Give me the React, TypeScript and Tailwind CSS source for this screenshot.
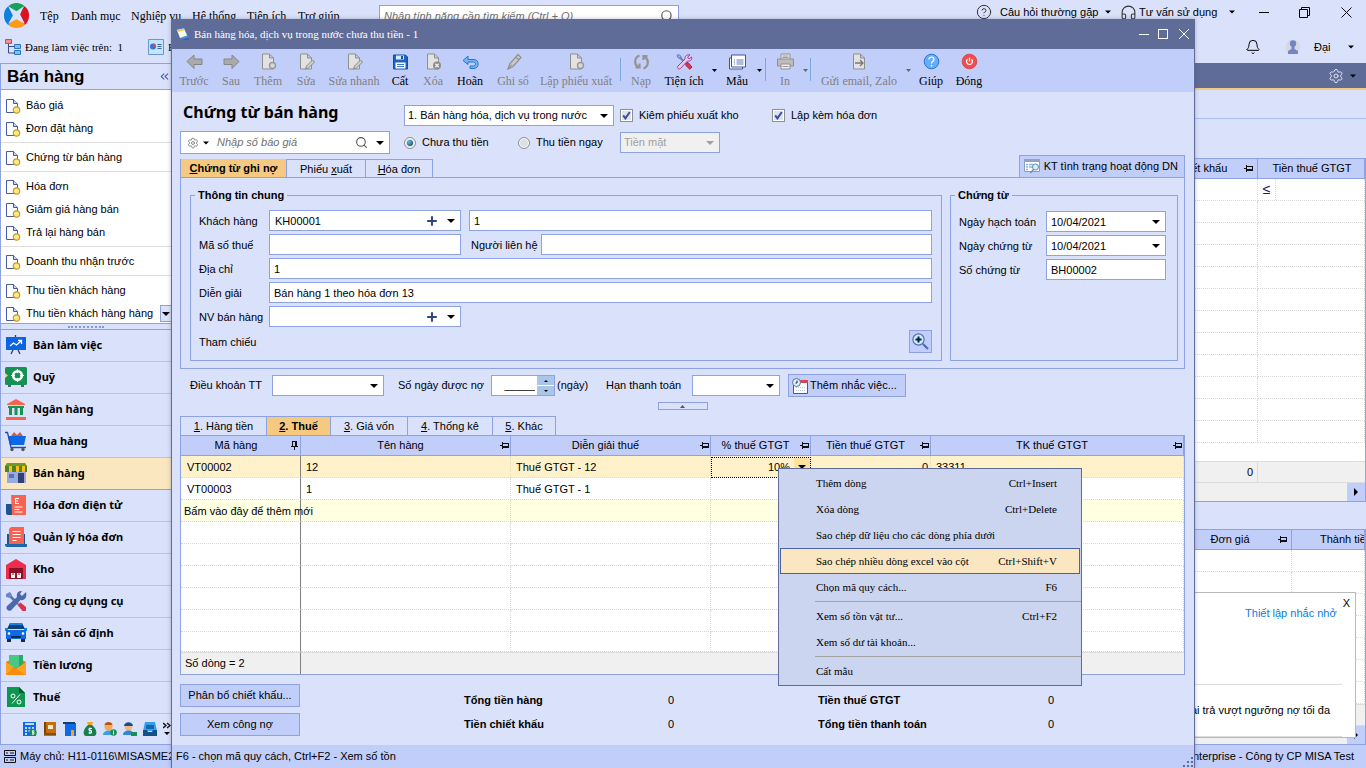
import React, { type ReactNode } from "react";
import { Bell, ChevronsLeft, CircleHelp, Headphones, Plus, Search, Settings } from "lucide-react";

const serif = "font-['Liberation_Serif','Times_New_Roman',serif]";

function Caret({ className = "text-black" }: { className?: string }) {
  return (
    <svg width="8" height="4" viewBox="0 0 8 4" className={`shrink-0 ${className}`} aria-hidden="true">
      <path d="M0 0h8L4 4z" fill="currentColor" />
    </svg>
  );
}

function PinSide() {
  return (
    <svg width="9" height="7" viewBox="0 0 9 7" className="shrink-0" aria-hidden="true">
      <path d="M0 3h2v1H0zM2 0h1v7H2zM3 1h6v1H3zM3 4h6v2H3zM8 1h1v5H8z" fill="#111" />
    </svg>
  );
}

function PinUp() {
  return (
    <svg width="7" height="9" viewBox="0 0 7 9" className="shrink-0" aria-hidden="true">
      <path d="M1 0h5v1H1zM1 0h1v6H1zM4 0h2v6H4zM0 5h7v1H0zM3 6h1v3H3z" fill="#111" />
    </svg>
  );
}

/* ---------- form controls ---------- */

function Select({ id, value, width, disabled }: { id: string; value: string; width: string; disabled?: boolean }) {
  const tone = disabled ? "bg-[#f0f0f0] text-[#a0a0a0]" : "bg-white text-black";
  return (
    <div className={`grid h-[21px] shrink-0 items-center border border-[#8ea1e0] ${width} ${tone}`}>
      <select
        id={id}
        aria-label={id}
        disabled={disabled}
        defaultValue={value}
        className="col-start-1 row-start-1 h-full w-full appearance-none bg-transparent pl-[3px] pr-4 opacity-100 outline-none"
      >
        <option>{value}</option>
      </select>
      <span className="pointer-events-none col-start-1 row-start-1 mr-[5px] justify-self-end">
        <Caret className={disabled ? "text-[#a0a0a0]" : "text-black"} />
      </span>
    </div>
  );
}

function Combo({ id, value, plus, width }: { id: string; value: string; plus?: boolean; width: string }) {
  return (
    <div className={`flex h-[21px] shrink-0 items-center border border-[#8ea1e0] bg-white ${width}`}>
      <input
        id={id}
        defaultValue={value}
        className={`h-full w-0 min-w-0 flex-1 outline-none ${plus ? "pl-[5px]" : "pl-1"}`}
      />
      {plus && (
        <button type="button" aria-label="Thêm mới" className="mr-2 text-[#33467f]">
          <Plus size={14} strokeWidth={3.5} />
        </button>
      )}
      <button type="button" aria-label="Mở danh sách" className="mr-[5px] flex h-full items-center">
        <Caret />
      </button>
    </div>
  );
}

function Field({ id, value = "", className = "" }: { id: string; value?: string; className?: string }) {
  return (
    <input
      id={id}
      aria-label={id}
      defaultValue={value}
      className={`h-[21px] min-w-0 border border-[#8ea1e0] bg-white pl-1 outline-none ${className}`}
    />
  );
}

function Check({ children }: { children: ReactNode }) {
  return (
    <label className="flex items-center gap-[6px] whitespace-nowrap">
      <span className="grid size-[13px] items-center justify-items-center">
        <input
          type="checkbox"
          defaultChecked
          className="col-start-1 row-start-1 size-[13px] appearance-none border border-[#8e8f8f] bg-[#dfe2ea] shadow-[inset_0_0_0_1px_#fff]"
        />
        <svg viewBox="0 0 9 9" className="pointer-events-none col-start-1 row-start-1 size-[9px]">
          <path d="M1.2 4.4l2.2 3L7.8 1" fill="none" stroke="#3c4f9b" strokeWidth="2" />
        </svg>
      </span>
      {children}
    </label>
  );
}

function Radio({ children, checked, width }: { children: ReactNode; checked?: boolean; width: string }) {
  return (
    <label className={`flex items-center gap-[6px] whitespace-nowrap ${width}`}>
      <span className="grid size-3 items-center justify-items-center">
        <input
          type="radio"
          name="payment"
          defaultChecked={checked}
          className="col-start-1 row-start-1 size-3 appearance-none rounded-full border border-[#8e8f8f] bg-[#dcdfe4] shadow-[inset_0_0_0_1px_#fff]"
        />
        {checked && (
          <span className="pointer-events-none col-start-1 row-start-1 size-[6px] rounded-full bg-radial-[at_35%_35%] from-[#5cc4ea] to-[#0b2f55]" />
        )}
      </span>
      {children}
    </label>
  );
}

/* ---------- toolbar icons ---------- */

const page = <path d="M2.5.5h7l4 4v11h-11zM9.5.5v4h4" fill="#e2e2e2" stroke="#8f8f8f" />;
const pencil = <path d="M14.5 6.5l2 2-6 6-3 1 1-3z" fill="#cfcfcf" stroke="#8a8a8a" />;

const toolIcons: Record<string, ReactNode> = {
  prev: <path d="M8 1.500v4h8v5.500H8v4L1 8z" fill="#aaa" stroke="#858585" />,
  next: <path d="M9 1.500v4H1v5.500h8v4l7-7z" fill="#aaa" stroke="#858585" />,
  add: (
    <>
      {page}
      <circle cx="12.5" cy="12" r="3" fill="#d8d8d8" stroke="#999" strokeWidth="1.4" />
    </>
  ),
  edit: (
    <>
      {page}
      {pencil}
    </>
  ),
  save: (
    <>
      <path d="M1.5 1.5h12l2 2v12h-14z" fill="#1c63c4" stroke="#14509f" />
      <path d="M4 2h8v4H4z" fill="#dcebfa" />
      <path d="M9 2.5h2v3H9z" fill="#14509f" />
      <path d="M3.5 9h10v6h-10z" fill="#fff" />
      <path d="M5 11h7M5 13h7" stroke="#3a79cc" />
    </>
  ),
  del: (
    <>
      {page}
      <circle cx="12" cy="12" r="4" fill="#8c8c8c" />
      <path d="M10.3 10.3l3.4 3.4M13.7 10.3l-3.4 3.4" stroke="#eee" strokeWidth="1.3" />
    </>
  ),
  undo: (
    <path
      d="M6 2.500L1 7l5 4V8.500h5.500c2.600 0 2.600 4 0 4H8V15h4c5.500 0 5.500-9 0-9H6z"
      fill="#74b6fa"
      stroke="#2a73cc"
    />
  ),
  pen: (
    <>
      <path d="M13 1l3 3-8 9-5 2.5L5 10z" fill="#c9c9c9" stroke="#939393" strokeWidth="1.3" />
      <path d="M11 4l3 2M3 15l4-4" stroke="#858585" />
    </>
  ),
  reload: (
    <path
      d="M6.5 2C1 4 1 11 5 13.5M2.5 14h4v-4M10.5 15C16 13 16 6 12 3.5M14.5 2.5h-4v4"
      fill="none"
      stroke="#949494"
      strokeWidth="2.2"
    />
  ),
  tools: (
    <>
      <path d="M3 3l9 9" stroke="#6d7ab7" strokeWidth="2" />
      <path d="M1 2l2-1 2 2-1 2-2-1z" fill="#9db1e8" stroke="#6071b4" />
      <path d="M10 10l2-1 4 4.5-2.200 2.300L10 12z" fill="#d9374e" stroke="#9e2140" />
      <path
        d="M14 1.500l-2.500 2.200 1.500 1.800 2.500-2c1 3-1.500 4.500-4 4L4.500 15c-1.800 1.500-4-.8-2.500-2.500L9 5.500C8.500 3 11 .5 14 1.500z"
        fill="#eec4e5"
        stroke="#93479c"
      />
    </>
  ),
  forms: (
    <>
      <path d="M.5 4.500h13v11H.5z" fill="#fff" stroke="#44548f" />
      <path d="M2.500 1.500h14v12h-14z" fill="#fff" stroke="#44548f" />
      <path d="M5 6.500h1M7.500 6.500h7M5 8.500h1M7.500 8.500h7M5 10.500h1M7.500 10.500h7" stroke="#5b78c6" />
    </>
  ),
  print: (
    <>
      <path d="M4 .5h9v6H4z" fill="#eee" stroke="#8f8f8f" />
      <path d="M.5 5.500h16v7H.5z" fill="#bdbdbd" stroke="#8f8f8f" />
      <path d="M4 10.500h9v5H4z" fill="#eee" stroke="#8f8f8f" />
      <path d="M5.500 2.500h6M5.500 4h6M5.500 13h6" stroke="#999" />
    </>
  ),
  send: (
    <>
      {page}
      <path d="M4 9.500h8M9 6.500l3 3-3 3" fill="none" stroke="#777" strokeWidth="1.3" />
    </>
  ),
  help: (
    <>
      <circle cx="8.5" cy="8" r="7.3" fill="#62aefc" stroke="#2f74cf" />
      <path d="M6 6c0-3.300 5.200-3 5 0-.1 1.800-2.500 1.700-2.500 4M8.500 11.500V13" fill="none" stroke="#fff" strokeWidth="1.4" />
    </>
  ),
  power: (
    <>
      <circle cx="8.5" cy="8" r="7.3" fill="#f14d4f" stroke="#cf4a52" />
      <path d="M6.500 5.800C4.500 7.500 5.800 11 8.500 11s4-3.500 2-5.200M8.500 4.200v3.800" fill="none" stroke="#fff" strokeWidth="1.2" />
    </>
  ),
};

type Tool =
  | { kind: "button"; icon: string; label: string; width: string; on?: boolean }
  | { kind: "caret"; width: string; on?: boolean }
  | { kind: "rule" };

const tools: Tool[] = [
  { kind: "button", icon: "prev", label: "Trước", width: "w-9" },
  { kind: "button", icon: "next", label: "Sau", width: "w-[38px]" },
  { kind: "button", icon: "add", label: "Thêm", width: "w-9" },
  { kind: "button", icon: "edit", label: "Sửa", width: "w-10" },
  { kind: "button", icon: "edit", label: "Sửa nhanh", width: "w-14" },
  { kind: "button", icon: "save", label: "Cất", width: "w-9", on: true },
  { kind: "button", icon: "del", label: "Xóa", width: "w-[30px]" },
  { kind: "button", icon: "undo", label: "Hoãn", width: "w-11", on: true },
  { kind: "button", icon: "pen", label: "Ghi sổ", width: "w-[42px]" },
  { kind: "button", icon: "add", label: "Lập phiếu xuất", width: "w-[84px]" },
  { kind: "rule" },
  { kind: "button", icon: "reload", label: "Nạp", width: "w-9" },
  { kind: "button", icon: "tools", label: "Tiện ích", width: "w-[50px]", on: true },
  { kind: "caret", width: "w-[10px]", on: true },
  { kind: "button", icon: "forms", label: "Mẫu", width: "w-9", on: true },
  { kind: "caret", width: "w-2", on: true },
  { kind: "rule" },
  { kind: "button", icon: "print", label: "In", width: "w-[34px]" },
  { kind: "caret", width: "w-[6px]" },
  { kind: "rule" },
  { kind: "button", icon: "send", label: "Gửi email, Zalo", width: "w-[92px]" },
  { kind: "caret", width: "w-[6px]" },
  { kind: "button", icon: "help", label: "Giúp", width: "w-10", on: true },
  { kind: "button", icon: "power", label: "Đóng", width: "w-9", on: true },
];

function Toolbar() {
  return (
    <div className={`flex h-[43px] shrink-0 items-stretch bg-[#c2cefa] pl-1 text-[12px] leading-4 ${serif}`}>
      {tools.map((t, i) => {
        if (t.kind === "rule") return <span key={i} className="mx-0.5 mt-[9px] h-[23px] w-px shrink-0 bg-[#7aa7dc]" />;
        if (t.kind === "caret")
          return (
            <button key={i} type="button" aria-label="Mở thêm" className={`flex shrink-0 justify-center pt-5 ${t.width}`}>
              <svg width="5" height="3" viewBox="0 0 5 3">
                <path d="M0 0h5L2.500 3z" fill={t.on ? "#000" : "#666"} />
              </svg>
            </button>
          );
        return (
          <button
            key={i}
            type="button"
            className={`flex shrink-0 flex-col items-center gap-[3px] whitespace-nowrap pt-1 ${t.width} ${
              t.on ? "text-black" : "text-[#808080]"
            }`}
          >
            <svg width="17" height="17" viewBox="0 0 17 16" aria-hidden="true">
              {toolIcons[t.icon]}
            </svg>
            <span>{t.label}</span>
          </button>
        );
      })}
    </div>
  );
}

/* ---------- sidebar ---------- */

const shortcutGroups = [
  ["Báo giá", "Đơn đặt hàng"],
  ["Chứng từ bán hàng"],
  ["Hóa đơn", "Giảm giá hàng bán", "Trả lại hàng bán"],
  ["Doanh thu nhận trước"],
  ["Thu tiền khách hàng", "Thu tiền khách hàng hàng"],
];

function DocIcon() {
  return (
    <svg width="15" height="16" viewBox="0 0 15 16" className="shrink-0" aria-hidden="true">
      <path d="M.5 1.500h7l4 4v9H.5z" fill="#fff" stroke="#4759a0" />
      <path d="M7.500 1.500v4h4" fill="#c9d6fb" stroke="#4759a0" />
      <circle cx="10.500" cy="12" r="3.200" fill="#ffe68a" stroke="#c49a2c" strokeWidth="1.200" />
    </svg>
  );
}

const navIcons: Record<string, ReactNode> = {
  board: (
    <>
      <path d="M10.500 0v2M8 15l-2 4M13 15l2 4" stroke="#20407a" strokeWidth="1.300" />
      <path d="M1 2h20v13H1z" fill="#0a64e4" />
      <path d="M5 11l3.500-3 3 2L16 6M13 5.500h3.500V9" fill="none" stroke="#fff" strokeWidth="1.300" />
    </>
  ),
  safe: (
    <>
      <path d="M3 17h3v3H3zM16 17h3v3h-3z" fill="#56606e" />
      <rect width="22" height="18" rx="1.500" fill="#159253" />
      <circle cx="12.500" cy="8.500" r="4.300" fill="none" stroke="#fff" strokeWidth="2.600" />
      <path d="M12.500 2v13M6 8.500h13" stroke="#fff" strokeWidth="1.200" />
      <circle cx="12.500" cy="8.500" r="2.500" fill="#159253" />
      <path d="M0 6l3 2.500L0 11z" fill="#e9df3c" />
    </>
  ),
  bank: (
    <>
      <path d="M11 0l9 5v1H2V5zM1 18h20v3H1z" fill="#fb6150" />
      <path d="M3 7h16v2H3zM4 9h3v7H4zM9.500 9h3v7h-3zM15 9h3v7h-3z" fill="#189450" />
    </>
  ),
  cart: (
    <>
      <path d="M6 5l3-4 3 3 3-3 3 4z" fill="#d35b43" />
      <path d="M3 5h18l-2 9H5z" fill="#0b68e6" />
      <path d="M0 1.500h2.500L6 16.500h15" fill="none" stroke="#1c4fb5" strokeWidth="1.300" />
      <circle cx="7" cy="18.500" r="1.700" fill="#555" />
      <circle cx="18" cy="18.500" r="1.700" fill="#555" />
    </>
  ),
  shop: (
    <>
      <path d="M2 8h19v12H2z" fill="#98abe0" />
      <path d="M13 10h6v10h-6z" fill="#34406f" />
      <path d="M4 11h5v4H4z" fill="#5a72bd" />
      <path d="M2 0h18l2 4v4.500H0V4z" fill="#fdc012" />
      <path d="M2 0h18l2 3H0z" fill="#6d9a2a" />
      <path d="M0 3h4v6H0zM7 3h4v6H7zM14 3h3v6h-3zM20 3h2v6h-2z" fill="#4f8426" />
    </>
  ),
  einvoice: (
    <>
      <path d="M1 9h7v11H3q-2 0-2-2z" fill="#1a5590" />
      <path d="M6 0h15v20H7z" fill="#fb6150" />
      <path d="M10 3.500h4M10 6h3M10 8.500h4M10.500 3v6M9.500 12h8M9.500 14.500h5M9.500 17h8" stroke="#fff" strokeWidth="1.100" />
    </>
  ),
  invoice: (
    <>
      <path d="M2 7h18v10H2z" fill="#1a5590" />
      <path d="M0 17h23v1q0 2-2 2H2q-2 0-2-2z" fill="#1768ad" />
      <path d="M6 0h13v17H4V2z" fill="#fb6150" />
      <path d="M7.500 4.500h8M7.500 7.500h8M7.500 10.500h8M7.500 13.500h4" stroke="#fff" strokeWidth="1.200" />
    </>
  ),
  store: (
    <>
      <path d="M1 6l10-6 10 6v14H1z" fill="#ee2c4e" />
      <path d="M4 9h14v11H4z" fill="#8a1228" />
      <path d="M6 14h4v5H6zM12 14h4v5h-4z" fill="#f4f4f4" />
      <path d="M7.500 14h1v2h-1zM13.500 14h1v2h-1z" fill="#8a1228" />
    </>
  ),
  wrench: (
    <>
      <path d="M3 3l10 10" stroke="#5572b8" strokeWidth="2.500" />
      <path d="M1 3l4-2 2 3-2 3-4-1z" fill="#6887cb" />
      <path d="M12.500 14l3-2.500 5.500 4.500v4h-3.500z" fill="#dc3150" />
      <path d="M21 1l-4 4-2-2 2-3c-4-.5-6 3-5 6L2 15c-2 3 1.500 6.500 4.500 4l9-10c4 1 7-3 5.500-8z" fill="#4c69ae" />
    </>
  ),
  car: (
    <>
      <path d="M5 0h12l3 6H2z" fill="#123f78" />
      <path d="M5 0h12l1 2H4zM0 5h3v3H0zM19 5h3v3h-3z" fill="#1486e8" />
      <path d="M1 7h20v9H1z" fill="#0d6ae4" />
      <path d="M2 16h4v3H2zM16 16h4v3h-4zM6 13h10v2H6z" fill="#12294d" />
      <circle cx="4" cy="10.500" r="1.300" fill="#fff" />
      <circle cx="18" cy="10.500" r="1.300" fill="#fff" />
    </>
  ),
  salary: (
    <>
      <path d="M1 7l10-5 10 5v13H1z" fill="#e08110" />
      <path d="M4 0h14v12H4z" fill="#47c983" />
      <path d="M14 0h4v12h-4z" fill="#2aa96b" />
      <path d="M1 7l10 7 10-7v13H1z" fill="#ffa21e" />
      <path d="M1 20l7-8 3 2 10 6z" fill="#f58c0c" />
    </>
  ),
  tax: (
    <>
      <path d="M2 0h12l6 6v14H2z" fill="#0d9650" />
      <path d="M14 0l6 6h-6z" fill="#075e34" />
      <circle cx="8" cy="9" r="2" fill="none" stroke="#fff" />
      <circle cx="14" cy="15" r="2" fill="none" stroke="#fff" />
      <path d="M15 7.500l-8 9" stroke="#fff" />
    </>
  ),
};

const nav = [
  ["board", "Bàn làm việc"],
  ["safe", "Quỹ"],
  ["bank", "Ngân hàng"],
  ["cart", "Mua hàng"],
  ["shop", "Bán hàng"],
  ["einvoice", "Hóa đơn điện tử"],
  ["invoice", "Quản lý hóa đơn"],
  ["store", "Kho"],
  ["wrench", "Công cụ dụng cụ"],
  ["car", "Tài sản cố định"],
  ["salary", "Tiền lương"],
  ["tax", "Thuế"],
];

const miniIcons: [string, ReactNode][] = [
  [
    "Giá thành",
    <>
      <path d="M0 0h13v14H0z" fill="#0d6ae4" />
      <path d="M2 2h9M2 6h2M5.500 6h2M9 6h2M2 9h2M5.500 9h2M2 12h2" stroke="#fff" strokeWidth="1.500" />
      <circle cx="10" cy="10.500" r="3.800" fill="#1a8e53" />
      <path d="M11.500 9h-2v1.500h1.500V12H9M10 8v5" stroke="#fff" fill="none" strokeWidth=".8" />
    </>,
  ],
  [
    "Sổ cái",
    <>
      <path d="M1 0h12v14H1z" fill="#c26f10" />
      <path d="M1 0h2v12H1z" fill="#7d420a" />
      <path d="M1 11h12v2H1z" fill="#8b4b0c" />
      <path d="M5 3h5v4H5z" fill="#fbe9c8" />
    </>,
  ],
  [
    "Hợp đồng",
    <>
      <path d="M2 1h11v13H2z" fill="#0d6ae4" />
      <path d="M0 0h12v2H0z" fill="#123f78" />
      <path d="M8 8h3v6H8z" fill="#fda51a" />
    </>,
  ],
  [
    "Ngân sách",
    <>
      <path d="M4 0h6l-1 3H5z" fill="#f2a51c" />
      <path d="M5 3h4c6 5 5 11 2 11H3c-3 0-4-6 2-11z" fill="#167f4b" />
      <path d="M9 6.500H6v2h2.500v2.500H5.500M7 5.500v6.500" stroke="#fff" fill="none" />
    </>,
  ],
  [
    "Thủ quỹ",
    <>
      <circle cx="5.500" cy="4.500" r="4" fill="#f7a94c" />
      <path d="M1.500 3C2-1 9-1 9.500 3z" fill="#b55413" />
      <path d="M0 13c0-6 11-6 11 0z" fill="#3f9fe2" />
      <circle cx="10.500" cy="10.500" r="3.300" fill="#1a8e53" />
      <path d="M10.500 8.500v4" stroke="#fff" />
    </>,
  ],
  [
    "Thủ kho",
    <>
      <circle cx="5.500" cy="5" r="3.800" fill="#f7b877" />
      <path d="M1 4C1.500-1 9.500-1 10 4z" fill="#17508f" />
      <path d="M0 13c0-6 11-6 11 0z" fill="#2f86d3" />
      <path d="M8 10h6v4H8z" fill="#1a8e53" />
    </>,
  ],
  [
    "Tài liệu",
    <>
      <path d="M2 0h10l2 9H0z" fill="#35a0ea" />
      <path d="M3 3h8v4H3z" fill="#1665ad" />
      <path d="M0 8h4l1 2h4l1-2h4v6H0z" fill="#11508c" />
    </>,
  ],
];

function Sidebar() {
  return (
    <aside className="relative flex w-[171px] shrink-0 flex-col border-b border-l border-[#8ea1e0]">
      <div className="flex h-[27px] shrink-0 items-center justify-between border-y border-[#8ea1e0] pl-[6px]">
        <h2 className="text-[17px] font-bold leading-5">Bán hàng</h2>
        <button type="button" aria-label="Thu gọn" className="text-[#4c62a8]">
          <ChevronsLeft size={13} />
        </button>
      </div>
      <ul className="h-[233px] shrink-0 overflow-hidden bg-white pt-1">
        {shortcutGroups.map((group, g) => (
          <li key={g} className={g ? "mt-0.5 border-t border-[#dedede] pt-[3px]" : ""}>
            {group.map((text) => (
              <a key={text} href="#" className="flex h-[23px] items-center gap-[5px] whitespace-nowrap pl-[5px]">
                <DocIcon />
                {text}
              </a>
            ))}
          </li>
        ))}
      </ul>
      <button
        type="button"
        aria-label="Cuộn xuống"
        className="absolute right-0 top-[242px] flex h-[17px] w-[11px] items-center justify-center border border-r-0 border-[#8ea1e0] bg-[#dae1fa]"
      >
        <Caret />
      </button>
      <div className="flex h-[7px] shrink-0 items-center justify-center border-y border-[#8ea1e0]">
        <span className="w-9 border-t-2 border-dotted border-[#8097de]" />
      </div>
      <nav className="font-['Noto_Sans','Open_Sans',sans-serif] font-bold">
        {nav.map(([icon, text]) => (
          <a
            key={text}
            href="#"
            className={`flex h-8 items-center gap-[6px] border-b pl-1 ${
              text === "Bán hàng" ? "border-[#8ea1e0] bg-[#fae6bf]" : "border-[#b3c2f2]"
            }`}
          >
            <svg width="22" height="21" viewBox="0 0 22 21" className="shrink-0" aria-hidden="true">
              {navIcons[icon]}
            </svg>
            {text}
          </a>
        ))}
      </nav>
      <div className="flex min-h-[30px] flex-1 items-center gap-[6px] overflow-hidden pl-[22px]">
        {miniIcons.map(([name, art]) => (
          <button key={name} type="button" aria-label={name} className="shrink-0">
            <svg width="14" height="14" viewBox="0 0 14 14">
              {art}
            </svg>
          </button>
        ))}
        <button type="button" aria-label="Thêm phân hệ" className="shrink-0">
          <svg width="8" height="14" viewBox="0 0 8 14">
            <path d="M0 1l3 2.500L0 6M4 1l3 2.500L4 6" fill="none" stroke="#111" strokeWidth="1.400" />
            <path d="M1 10h6l-3 3z" />
          </svg>
        </button>
      </div>
    </aside>
  );
}

/* ---------- main window ---------- */

function Logo() {
  return (
    <svg width="25" height="25" viewBox="0 0 24 24" className="ml-1 mt-[3px] shrink-0" aria-label="MISA">
      <path d="M12 12L4 3A12 12 0 0 1 20 3z" fill="#15a35b" />
      <path d="M12 12L20 3A12 12 0 0 1 20 21z" fill="#d81420" />
      <path d="M12 12L20 21A12 12 0 0 1 4 21z" fill="#ff9a12" />
      <path d="M12 12L4 21A12 12 0 0 1 4 3z" fill="#0f7fdc" />
      <path d="M4 3l8 5 7-5-3.500 8L20 20l-8-4.500L4 20l4.500-8z" fill="#dae1fa" />
    </svg>
  );
}

const appMenu: [string, string][] = [
  ["Tệp", "w-[31px]"],
  ["Danh mục", "w-[60px]"],
  ["Nghiệp vụ", "w-[61px]"],
  ["Hệ thống", "w-[55px]"],
  ["Tiện ích", "w-[51px]"],
  ["Trợ giúp", "w-[81px]"],
];

function AppHeader() {
  return (
    <header className="flex h-[63px] shrink-0 flex-col">
      <div className="flex h-[31px] items-start">
        <Logo />
        <nav className={`ml-[11px] flex h-8 items-center whitespace-nowrap text-[12px] ${serif}`}>
          {appMenu.map(([text, width]) => (
            <a key={text} href="#" className={width}>
              {text}
            </a>
          ))}
        </nav>
        <div className="mt-[5px] flex h-[22px] w-[300px] items-center border border-[#8ea1e0] bg-white pr-1">
          <input
            aria-label="Tìm kiếm tính năng"
            placeholder="Nhập tính năng cần tìm kiếm (Ctrl + Q)"
            className="min-w-0 flex-1 pl-1 italic outline-none placeholder:text-[#707070]"
          />
          <Search size={14} className="text-[#555]" />
        </div>
        <div className="ml-auto flex h-6 items-center whitespace-nowrap">
          <CircleHelp size={16} strokeWidth={1.5} className="mr-2 text-[#333]" />
          <a href="#" className="w-[105px]">
            Câu hỏi thường gặp
          </a>
          <Caret className="mr-[9px] w-[6px]" />
          <Headphones size={17} strokeWidth={1.5} className="mr-0.5 text-[#333]" />
          <a href="#" className="w-[90px]">
            Tư vấn sử dụng
          </a>
          <Caret className="mr-6 w-[6px]" />
          <button type="button" aria-label="Thu nhỏ" className="mr-[30px] h-px w-[10px] bg-black" />
          <button type="button" aria-label="Khôi phục" className="mr-[31px]">
            <svg width="11" height="11" viewBox="0 0 11 11" fill="none" stroke="#000">
              <path d="M.5 2.500h8v8h-8zM2.500 2.500v-2h8v8h-2" />
            </svg>
          </button>
          <button type="button" aria-label="Đóng ứng dụng" className="mr-[14px]">
            <svg width="11" height="11" viewBox="0 0 11 11" stroke="#000">
              <path d="M.5.5l10 10M10.500.5l-10 10" />
            </svg>
          </button>
        </div>
      </div>
      <div className="flex h-8 items-center whitespace-nowrap">
        <svg width="17" height="16" viewBox="0 0 17 16" className="ml-[5px] mr-[3px]" aria-hidden="true">
          <path d="M.5.500h6v4h-6z" fill="#fb8b89" stroke="#d24a4a" />
          <path d="M9.500 5.500h6v4h-6zM9.500 11.500h6v4h-6z" fill="#7cc0fb" stroke="#2d75c8" />
          <path d="M3.500 5v9h6M3.500 7.500h6" fill="none" stroke="#3a4f86" />
        </svg>
        <span className={`w-[123px] whitespace-pre ${serif}`}>{"Đang làm việc trên:  1"}</span>
        <svg width="16" height="16" viewBox="0 0 16 16" className="mr-1" aria-hidden="true">
          <path d="M.5.5h15v15H.5z" fill="#bfe6fb" stroke="#6d97c9" />
          <circle cx="5" cy="7.500" r="3" fill="#3f6fd0" />
          <path d="M5 7.500V4.500a3 3 0 0 1 3 3z" fill="#e44" />
          <path d="M9.500 5.500h4M9.500 7.500h4M9.500 9.500h4" stroke="#44659f" />
        </svg>
        <a href="#" className={serif}>
          Báo cáo
        </a>
        <div className="ml-auto flex items-center">
          <button type="button" aria-label="Thông báo" className="mr-6">
            <Bell size={16} strokeWidth={1.5} />
          </button>
          <svg width="16" height="16" viewBox="0 0 16 16" className="mr-[13px]" aria-hidden="true">
            <circle cx="8" cy="8" r="7.500" fill="#d5d9e0" />
            <circle cx="8" cy="4.500" r="3.200" fill="#7187c4" />
            <path d="M6.500 7h3v3l3.500 2v3H3v-3l3.500-2z" fill="#7187c4" />
          </svg>
          <span className="w-[34px]">Đại</span>
          <Caret className="mr-3 w-[6px]" />
        </div>
      </div>
    </header>
  );
}

const thBack = "border-r border-b border-[#8ea1e0] font-normal";
const tdBack = "border-r border-b border-dotted border-[#d8d8d8]";

function BackTable({
  cols,
  filter,
  rows,
  total,
  className,
}: {
  cols: [string, string][];
  filter?: boolean;
  rows: number;
  total?: string;
  className: string;
}) {
  return (
    <div className={`flex flex-col border border-[#8ea1e0] bg-white ${className}`}>
      <table className="w-full table-fixed border-separate border-spacing-0">
        <colgroup>
          <col />
          {cols.map(([name, width]) => (
            <col key={name} className={width} />
          ))}
        </colgroup>
        <thead className="bg-[#c2cefa]">
          <tr className="h-5">
            <th className={thBack} />
            {cols.map(([name], i) => (
              <th key={name} className={`${thBack} overflow-hidden whitespace-nowrap p-0`}>
                <div className={`flex items-center ${i === 0 ? "pr-1" : "w-[108px]"}`}>
                  <span className="flex-1">{name}</span>
                  {i === 0 && <PinSide />}
                </div>
              </th>
            ))}
          </tr>
        </thead>
        <tbody>
          {Array.from({ length: rows }, (_, r) => (
            <tr key={r} className="h-[22px]">
              <td className={tdBack} />
              <td className={tdBack} />
              <td className={`${tdBack} p-0`}>
                {filter && r === 0 && (
                  <span className="flex h-[21px] w-[18px] items-center justify-center border-r border-dotted border-[#d8d8d8] text-[14px] text-[#1d1d4f]">
                    ≤
                  </span>
                )}
              </td>
            </tr>
          ))}
        </tbody>
      </table>
      <div className="mt-auto flex h-[22px] shrink-0 items-center justify-end border-y border-[#dcdcdc] bg-[#f0f0f0]">
        <span className="flex h-full w-[100px] items-center justify-end border-r border-[#dcdcdc] pr-1">{total}</span>
        <span className="w-[107px]" />
      </div>
      <div className="flex h-[18px] shrink-0 justify-end bg-[#f0f0f0]">
        <button type="button" aria-label="Cuộn phải" className="flex w-[18px] items-center justify-center bg-[#c2cefa]">
          <svg width="4" height="8" viewBox="0 0 4 8">
            <path d="M0 0l4 4-4 4z" />
          </svg>
        </button>
      </div>
    </div>
  );
}

function MainArea() {
  return (
    <main className="relative flex min-w-0 flex-1 flex-col">
      <div className="flex h-[27px] shrink-0 items-center justify-end border-b-2 border-[#f5c97f] bg-[#5f6c98] pr-[10px] text-white">
        <Settings size={16} strokeWidth={1.5} className="mr-[6px] text-[#dfe4f5]" />
        <Caret className="w-[6px] text-black" />
      </div>
      <div className="h-[29px] shrink-0 border-b border-[#a9bdf5]" />
      <BackTable
        className="mt-[39px] h-[344px] shrink-0"
        filter
        rows={12}
        total="0"
        cols={[
          ["Chiết khấu", "w-[100px]"],
          ["Tiền thuế GTGT", "w-[107px]"],
        ]}
      />
      <BackTable
        className="mt-[27px] min-h-0 flex-1 overflow-hidden"
        rows={7}
        cols={[
          ["Đơn giá", "w-[110px]"],
          ["Thành tiền", "w-[73px]"],
        ]}
      />
      <section className="absolute bottom-[7px] right-[10px] flex h-[146px] w-[360px] flex-col border border-[#b9b9b9] bg-white pl-4">
        <div className="flex items-start justify-end gap-[6px] pr-[5px] leading-3">
          <a href="#" className="pt-[14px] text-[#0a7be0]">
            Thiết lập nhắc nhở
          </a>
          <button type="button" aria-label="Đóng nhắc nhở" className="pt-1">
            X
          </button>
        </div>
        <div className="mr-[13px] mt-auto flex h-[53px] items-center justify-end border-y border-[#dcdcdc] pr-[12px]">
          Khách hàng phải trả vượt ngưỡng nợ tối đa
        </div>
      </section>
    </main>
  );
}

/* ---------- voucher window ---------- */

function InfoPanel() {
  const label = "w-[70px] shrink-0 whitespace-nowrap pt-0.5";
  return (
    <div className="flex gap-2 border border-[#8ea1e0] px-[9px] pb-[7px] pr-[6px] pt-[9px]">
      <fieldset className="min-w-0 flex-1 border border-[#8ea1e0] pb-[7px] pl-2 pr-[9px]">
        <legend className="-ml-1 px-[3px] font-bold leading-4">Thông tin chung</legend>
        <div className="flex flex-col gap-[3px] pt-[7px]">
          <div className="flex items-center">
            <label htmlFor="customer" className={label}>
              Khách hàng
            </label>
            <Combo id="customer" value="KH00001" plus width="w-[192px]" />
            <Field id="Tên khách hàng" value="1" className="ml-2 flex-1" />
          </div>
          <div className="flex items-center">
            <label htmlFor="tax-code" className={label}>
              Mã số thuế
            </label>
            <Field id="tax-code" className="w-[192px]" />
            <label htmlFor="contact" className="ml-[10px] w-[70px] whitespace-nowrap pt-0.5">
              Người liên hệ
            </label>
            <Field id="contact" className="flex-1" />
          </div>
          <div className="flex items-center">
            <label htmlFor="address" className={label}>
              Địa chỉ
            </label>
            <Field id="address" value="1" className="flex-1" />
          </div>
          <div className="flex items-center">
            <label htmlFor="note" className={label}>
              Diễn giải
            </label>
            <Field id="note" value="Bán hàng 1 theo hóa đơn 13" className="flex-1" />
          </div>
          <div className="flex items-center">
            <label htmlFor="seller" className={label}>
              NV bán hàng
            </label>
            <Combo id="seller" value="" plus width="w-[192px]" />
          </div>
          <div className="flex items-center justify-between">
            <span className={label}>Tham chiếu</span>
            <button
              type="button"
              aria-label="Tìm chứng từ tham chiếu"
              className="flex size-[23px] items-center justify-center border border-[#8ea1e0] bg-[#c2cefa]"
            >
              <svg width="17" height="17" viewBox="0 0 17 17" aria-hidden="true">
                <path d="M11 11l5 5" stroke="#5a6db4" strokeWidth="2.4" />
                <circle cx="6.5" cy="6.5" r="5.6" fill="#c4effb" stroke="#5a6db4" strokeWidth="1.2" />
                <path d="M6.5 3.5v6M3.5 6.5h6" stroke="#111b3d" strokeWidth="2" />
              </svg>
            </button>
          </div>
        </div>
      </fieldset>
      <fieldset className="w-[228px] shrink-0 border border-[#8ea1e0] pl-2 pr-[11px]">
        <legend className="-ml-1 px-[3px] font-bold leading-4">Chứng từ</legend>
        <div className="flex flex-col gap-[3px] pt-2">
          <div className="flex items-center justify-between whitespace-nowrap">
            <label htmlFor="posting-date" className="pt-0.5">
              Ngày hạch toán
            </label>
            <Combo id="posting-date" value="10/04/2021" width="w-[120px]" />
          </div>
          <div className="flex items-center justify-between whitespace-nowrap">
            <label htmlFor="voucher-date" className="pt-0.5">
              Ngày chứng từ
            </label>
            <Combo id="voucher-date" value="10/04/2021" width="w-[120px]" />
          </div>
          <div className="flex items-center justify-between whitespace-nowrap">
            <label htmlFor="voucher-no" className="pt-0.5">
              Số chứng từ
            </label>
            <Field id="voucher-no" value="BH00002" className="w-[120px]" />
          </div>
        </div>
      </fieldset>
    </div>
  );
}

function TermsRow() {
  return (
    <div className="mt-[5px] flex h-[23px] items-center whitespace-nowrap pl-[10px]">
      <label htmlFor="Điều khoản" className="w-[82px]">
        Điều khoản TT
      </label>
      <Select id="Điều khoản" value="" width="w-[112px]" />
      <label htmlFor="due-days" className="ml-[14px] w-[93px]">
        Số ngày được nợ
      </label>
      <div className="flex h-[21px] w-[64px] border border-[#8ea1e0] bg-white">
        <input id="due-days" defaultValue="_____" className="w-0 min-w-0 flex-1 pr-[2px] text-right outline-none" />
        <div className="flex w-[17px] flex-col gap-px">
          <button type="button" aria-label="Tăng" className="flex flex-1 items-center justify-center bg-[#a9c5e8]">
            <svg width="4" height="2" viewBox="0 0 4 2">
              <path d="M0 2h4L2 0z" />
            </svg>
          </button>
          <button type="button" aria-label="Giảm" className="flex flex-1 items-center justify-center bg-[#a9c5e8]">
            <svg width="4" height="2" viewBox="0 0 4 2">
              <path d="M0 0h4L2 2z" />
            </svg>
          </button>
        </div>
      </div>
      <span className="ml-[2px] w-[49px]">(ngày)</span>
      <label htmlFor="Hạn" className="w-[86px]">
        Hạn thanh toán
      </label>
      <Select id="Hạn" value="" width="w-[88px]" />
      <button
        type="button"
        className="ml-2 flex h-[23px] w-[118px] items-center gap-[2px] border border-[#8ea1e0] bg-[#c2cefa] pl-[3px]"
      >
        <svg width="16" height="16" viewBox="0 0 16 16" className="shrink-0" aria-hidden="true">
          <path d="M1.500 2.500h14v13h-14z" fill="#fff" stroke="#4a5a9c" />
          <path d="M7 2h9v3H7z" fill="#d9454a" />
          <path d="M4 9.500h10M4 12.500h10" stroke="#b8c4dd" strokeDasharray="1 1" />
          <circle cx="4.500" cy="4.500" r="4" fill="#d9f1fa" stroke="#5d6f9f" />
          <path d="M5 2.500v2.500H3.500" fill="none" stroke="#223" />
        </svg>
        Thêm nhắc việc...
      </button>
    </div>
  );
}

const detailCols: [string, string][] = [
  ["Mã hàng", "w-[120px]"],
  ["Tên hàng", "w-[210px]"],
  ["Diễn giải thuế", "w-[200px]"],
  ["% thuế GTGT", "w-[100px]"],
  ["Tiền thuế GTGT", "w-[120px]"],
  ["TK thuế GTGT", ""],
];

const detailRows = [
  ["VT00002", "12", "Thuế GTGT - 12", "10%", "0", "33311"],
  ["VT00003", "1", "Thuế GTGT - 1", "", "", ""],
  ["Bấm vào đây để thêm mới", "", "", "", "", ""],
  ...Array.from({ length: 6 }, () => ["", "", "", "", "", ""]),
];

const rowTone = ["bg-[#fff2cb]", "bg-white", "bg-[#ffffe1]"];
const cellPad = ["pl-[6px] pr-0", "pl-[5px] pr-0", "pl-[5px] pr-0", "px-0", "pl-0 pr-[2px] text-right", "pl-[5px] pr-0"];

function DetailTable() {
  return (
    <div className="border border-[#8ea1e0] bg-white">
      <table className="w-full table-fixed border-separate border-spacing-0">
        <colgroup>
          {detailCols.map(([name, width]) => (
            <col key={name} className={width} />
          ))}
        </colgroup>
        <thead className="bg-[#c2cefa]">
          <tr className="h-5">
            {detailCols.map(([name], i) => (
              <th key={name} className="border-b border-r border-[#8ea1e0] p-0 font-normal">
                <div className={`flex items-center whitespace-nowrap ${i === 0 ? "pr-0.5" : "pr-px"}`}>
                  <span className="flex-1">{name}</span>
                  {i === 0 ? <PinUp /> : <PinSide />}
                </div>
              </th>
            ))}
          </tr>
        </thead>
        <tbody>
          {detailRows.map((row, r) => (
            <tr key={r} className={`${rowTone[r] ?? "bg-white"} ${r === 8 ? "h-5" : "h-[22px]"}`}>
              {row.map((cell, c) => {
                if (r === 0 && c === 3)
                  return (
                    <td key={c} className="p-0">
                      <div className="flex h-[21px] items-center justify-end border border-dotted border-black">
                        <span className="mr-1">{cell}</span>
                        <button
                          type="button"
                          aria-label="Chọn thuế suất"
                          className="flex h-full w-4 items-center justify-center bg-[#ffe39c]"
                        >
                          <Caret />
                        </button>
                      </div>
                    </td>
                  );
                return (
                  <td
                    key={c}
                    className={`whitespace-nowrap border-b border-r border-b-[#d8d8d8] pb-0 pt-px [border-bottom-style:dotted] ${
                      c === 0 ? "border-r-[#808080]" : "border-r-[#d8d8d8] [border-right-style:dotted]"
                    } ${r === 2 && c === 0 ? "pl-[3px] pr-0" : cellPad[c]}`}
                  >
                    {cell}
                  </td>
                );
              })}
            </tr>
          ))}
        </tbody>
        <tfoot className="bg-[#f0f0f0]">
          <tr className="h-[22px]">
            <td className="border-r border-t border-r-[#808080] border-t-[#dcdcdc] py-0 pl-1">Số dòng = 2</td>
            <td colSpan={5} className="border-t border-[#dcdcdc]" />
          </tr>
        </tfoot>
      </table>
    </div>
  );
}

const detailTabs: [string, string, string][] = [
  ["1", "Hàng tiền", "w-[87px]"],
  ["2", "Thuế", "w-[64px]"],
  ["3", "Giá vốn", "w-[77px]"],
  ["4", "Thống kê", "w-[85px]"],
  ["5", "Khác", "w-[63px]"],
];

function VoucherWindow() {
  const tab = "h-[19px] border-r border-t border-[#8ea1e0] text-center";
  return (
    <section className="absolute inset-x-[171px] bottom-0 top-[19px] flex flex-col border-x border-[#5f6c98] bg-[#dae1fa] shadow-[0_0_4px_rgba(60,70,110,0.35)]">
      <div className={`flex h-[30px] shrink-0 items-center bg-[#5f6c98] pl-1 pr-[5px] text-white ${serif}`}>
        <svg width="14" height="14" viewBox="0 0 14 14" className="mr-1" aria-hidden="true">
          <path d="M0 2l8-1 5 9-8 3z" fill="#3b8be8" />
          <path d="M1 3l7-1.500 3 7L4 11z" fill="#fffbe0" />
          <path d="M1 3l7-1.500.6 1.800L1.700 5z" fill="#f5c94a" />
          <path d="M5 13l8-2v1.500z" fill="#2f55c8" />
        </svg>
        <h1 className="flex-1">Bán hàng hóa, dịch vụ trong nước chưa thu tiền - 1</h1>
        <button type="button" aria-label="Thu nhỏ cửa sổ" className="mr-[9px] h-px w-[10px] bg-white" />
        <button type="button" aria-label="Phóng to cửa sổ" className="mr-[11px] size-[10px] border border-white" />
        <button type="button" aria-label="Đóng cửa sổ">
          <svg width="10" height="10" viewBox="0 0 10 10" stroke="#fff">
            <path d="M0 0l10 10M10 0L0 10" />
          </svg>
        </button>
      </div>
      <Toolbar />
      <div className="flex flex-1 flex-col pl-2 pr-[9px]">
        <div className="flex h-[66px] shrink-0 gap-[14px] pt-[9px]">
          <div className="w-[210px] shrink-0">
            <h2 className="h-[30px] whitespace-nowrap pl-[3px] font-['Noto_Sans','Open_Sans',sans-serif] text-[16px] font-bold leading-[22px]">
              Chứng từ bán hàng
            </h2>
            <div className="flex h-[23px] items-center border border-[#8ea1e0] bg-white">
              <button type="button" aria-label="Tùy chọn tìm" className="ml-[6px] flex items-center gap-1">
                <Settings size={12} className="text-[#888]" />
                <Caret className="w-[6px]" />
              </button>
              <input
                aria-label="Nhập số báo giá"
                placeholder="Nhập số báo giá"
                className="w-0 min-w-0 flex-1 pl-2 italic outline-none placeholder:text-[#707070]"
              />
              <Search size={13} className="mr-2 text-[#555]" />
              <button type="button" aria-label="Mở báo giá" className="mr-[5px]">
                <Caret />
              </button>
            </div>
          </div>
          <div className="flex flex-col gap-[6px] pt-1">
            <div className="flex h-[21px] items-center">
              <Select id="Loại chứng từ" value="1. Bán hàng hóa, dịch vụ trong nước" width="w-[210px]" />
              <div className="ml-[6px] w-[152px]">
                <Check>Kiêm phiếu xuất kho</Check>
              </div>
              <Check>Lập kèm hóa đơn</Check>
            </div>
            <div className="flex h-[21px] items-center">
              <Radio checked width="w-[114px]">
                Chưa thu tiền
              </Radio>
              <Radio width="w-[102px]">Thu tiền ngay</Radio>
              <Select id="Phương thức" value="Tiền mặt" width="w-[100px]" disabled />
            </div>
          </div>
        </div>
        <div className="-mb-px flex h-5 items-end">
          <button type="button" className="h-[19px] w-[106px] border-l border-[#8ea1e0] bg-[#f5ca80] font-bold">
            <u>C</u>hứng từ ghi nợ
          </button>
          <button type="button" className={`${tab} w-[80px] border-l`}>
            Phiếu <u>x</u>uất
          </button>
          <button type="button" className={`${tab} w-[67px]`}>
            <u>H</u>óa đơn
          </button>
          <button
            type="button"
            className="-mt-1 ml-auto flex h-[23px] items-center gap-1 whitespace-nowrap border border-[#8ea1e0] bg-[#c2cefa] px-1 pr-[6px]"
          >
            <svg width="16" height="15" viewBox="0 0 16 15" aria-hidden="true">
              <path d="M.5.5h15v12H.5z" fill="#fff" stroke="#8a9cb8" />
              <path d="M0 0h16v3H0z" fill="#8fa3bf" />
              <path d="M2 5.500h2M5 5.500h4M2 8h2M5 8h4M2 10.500h2" stroke="#8cb0e8" strokeWidth="1.300" />
              <circle cx="11.500" cy="8" r="3" fill="#cff2fb" stroke="#6a8aa8" />
              <path d="M9.500 10.500L6.500 14" stroke="#7c93ab" strokeWidth="1.800" />
            </svg>
            KT tình trạng hoạt động DN
          </button>
        </div>
        <InfoPanel />
        <TermsRow />
        <button
          type="button"
          aria-label="Thu gọn phần thông tin"
          className="mt-[5px] flex h-2 w-[50px] shrink-0 items-center justify-center self-center border border-[#8ea1e0]"
        >
          <svg width="5" height="3" viewBox="0 0 5 3">
            <path d="M0 3h5L2.500 0z" fill="#555" />
          </svg>
        </button>
        <div className="mt-[6px] flex h-[19px] shrink-0 items-end">
          {detailTabs.map(([n, text, width]) => (
            <button
              key={n}
              type="button"
              className={`${width} h-full border-r border-t border-[#8ea1e0] ${n === "1" ? "border-l" : ""} ${
                n === "2" ? "bg-[#f5ca80] font-bold" : ""
              }`}
            >
              <u>{n}</u>. {text}
            </button>
          ))}
        </div>
        <DetailTable />
        <div className="mt-[9px] flex">
          <div className="flex w-[120px] flex-col gap-[6px]">
            <button type="button" className="h-[23px] border border-[#8ea1e0] bg-[#c2cefa]">
              Phân bổ chiết khấu...
            </button>
            <button type="button" className="h-[23px] border border-[#8ea1e0] bg-[#c2cefa]">
              Xem công nợ
            </button>
          </div>
          <dl className="ml-[164px] mt-[5px] grid grid-cols-[200px_10px_144px_226px_10px] leading-[23px]">
            <dt className="font-bold">Tổng tiền hàng</dt>
            <dd className="text-right">0</dd>
            <dt className="col-start-4 font-bold">Tiền thuế GTGT</dt>
            <dd className="text-right">0</dd>
            <dt className="font-bold">Tiền chiết khấu</dt>
            <dd className="text-right">0</dd>
            <dt className="col-start-4 font-bold">Tổng tiền thanh toán</dt>
            <dd className="text-right">0</dd>
          </dl>
        </div>
      </div>
      <footer className="flex h-[23px] shrink-0 items-center justify-between bg-[#c2cefa] pl-1">
        F6 - chọn mã quy cách, Ctrl+F2 - Xem số tồn
        <svg width="11" height="11" viewBox="0 0 11 11" className="self-end" aria-hidden="true">
          <path d="M8 0h2v2H8zM4 4h2v2H4zM8 4h2v2H8zM0 8h2v2H0zM4 8h2v2H4zM8 8h2v2H8z" fill="#5f6c98" />
        </svg>
      </footer>
    </section>
  );
}

/* ---------- row context menu ---------- */

const menuItems: ([string, string] | null)[] = [
  ["Thêm dòng", "Ctrl+Insert"],
  ["Xóa dòng", "Ctrl+Delete"],
  ["Sao chép dữ liệu cho các dòng phía dưới", ""],
  ["Sao chép nhiều dòng excel vào cột", "Ctrl+Shift+V"],
  ["Chọn mã quy cách...", "F6"],
  null,
  ["Xem số tồn vật tư...", "Ctrl+F2"],
  ["Xem số dư tài khoản...", ""],
  null,
  ["Cất mẫu", ""],
];

function ContextMenu() {
  return (
    <div
      role="menu"
      className={`absolute left-[778px] top-[468px] w-[304px] border border-[#5f6c98] bg-[#cbd5f0] py-px ${serif}`}
    >
      {menuItems.map((item, i) =>
        item ? (
          <button
            key={i}
            type="button"
            role="menuitem"
            className={`mx-px flex h-[26px] w-[300px] items-center justify-between whitespace-nowrap border pl-[35px] pr-[22px] ${
              i === 3 ? "border-[#4a62a8] bg-[#fae6c0]" : "border-transparent"
            }`}
          >
            <span>{item[0]}</span>
            <span>{item[1]}</span>
          </button>
        ) : (
          <div key={i} className="ml-9 h-[3px]">
            <div className="h-[2px] border-b border-[#a3a3a3]" />
          </div>
        ),
      )}
    </div>
  );
}

export default function App() {
  return (
    <div className="relative flex h-screen flex-col overflow-hidden bg-[#dae1fa] font-['Liberation_Sans',Arial,sans-serif] text-[11px] text-black">
      <AppHeader />
      <div className="flex min-h-0 flex-1">
        <Sidebar />
        <MainArea />
      </div>
      <footer className="flex h-[23px] shrink-0 items-center bg-[#c2cefa] pl-1 pr-3">
        <svg width="12" height="13" viewBox="0 0 12 13" className="mr-1 shrink-0" aria-hidden="true">
          <path d="M.5.5h11v5H.5zM.5 7.500h11v5H.5zM2 3h2M6 3h4M2 10h2M6 10h4" fill="none" stroke="#111" />
        </svg>
        <span className="flex-1 whitespace-nowrap">Máy chủ: H11-0116\MISASME2</span>
        <span className="whitespace-nowrap">Enterprise - Công ty CP MISA Test</span>
      </footer>
      <VoucherWindow />
      <ContextMenu />
    </div>
  );
}
